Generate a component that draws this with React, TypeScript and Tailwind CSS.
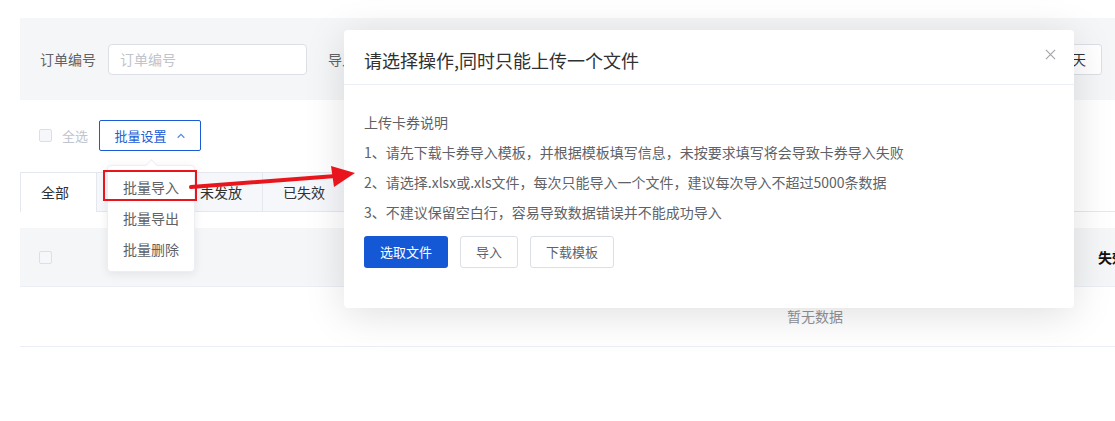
import React from "react";

const TABS = ["全部", "已发放", "未发放", "已失效", "已使用"];
const MENU = ["批量导入", "批量导出", "批量删除"];
const RULES = [
  "1、请先下载卡券导入模板，并根据模板填写信息，未按要求填写将会导致卡券导入失败",
  "2、请选择.xlsx或.xls文件，每次只能导入一个文件，建议每次导入不超过5000条数据",
  "3、不建议保留空白行，容易导致数据错误并不能成功导入",
];

function Box() {
  return <span className="block h-[13px] w-[13px] flex-none rounded-[2px] border border-[#dcdfe6] bg-[#f5f7fa]" />;
}

export default function App() {
  return (
    <div className="relative h-[421px] w-[1115px] overflow-hidden bg-white font-['Noto_Sans_CJK_SC',sans-serif] text-[14px] text-[#606266]">
      <div className="pl-5 pt-[18px]">
        {/* 筛选 */}
        <div className="flex h-[82px] items-center bg-[#f5f6f7] pl-5 pr-[13px]">
          <span className="mr-3 whitespace-nowrap">订单编号</span>
          <div className="flex h-[31px] w-[199px] items-center rounded-[4px] border border-[#dcdfe6] bg-white px-[11px] text-[#c0c4cc]">
            订单编号
          </div>
          <span className="ml-[21px] whitespace-nowrap">导入时间</span>
          <div className="flex-1" />
          <div className="flex h-[31px] items-center rounded-[3px] border border-[#dcdfe6] bg-white px-[15px] text-[#303133]">
            近7天
          </div>
        </div>

        {/* 操作栏 */}
        <div className="mt-5 flex h-[31px] items-center pl-[19px]">
          <Box />
          <span className="ml-[10px] text-[13px] text-[#c0c4cc]">全选</span>
          <button className="ml-[11px] flex h-[31px] w-[102px] items-center justify-center gap-[9px] rounded-[2px] border border-[#1a5bd6] text-[13px] text-[#1a5bd6]">
            批量设置
            <svg viewBox="0 0 12 12" className="h-[10px] w-[10px]" fill="none" stroke="#5b8ae0" strokeWidth={1.6}>
              <path d="M2 8l4-4 4 4" />
            </svg>
          </button>
        </div>

        {/* 标签 */}
        <div className="mt-[21px] flex h-10 w-[1200px]">
          {TABS.map((t, i) => (
            <div
              key={t}
              className={
                i === 0
                  ? "flex w-[77px] items-center border border-b-0 border-[#e4e7ed] bg-white pl-5 text-[#303133]"
                  : "flex w-[83px] items-center justify-center border-b border-r border-t border-[#e4e7ed] bg-[#f5f7fa] text-[#303133]"
              }
            >
              {t}
            </div>
          ))}
          <div className="flex-1 border-b border-[#e4e7ed]" />
        </div>

        {/* 表格 */}
        <div className="mt-4 w-[1590px]">
          <div className="grid h-[59px] grid-cols-[58px_1020px_1fr] items-center border-b border-[#ebeef5] bg-[#f5f6f8]">
            <div className="pl-[19px]">
              <Box />
            </div>
            <div />
            <div className="whitespace-nowrap font-bold text-[#111]">失效时间</div>
          </div>
          <div className="flex h-[60px] items-center justify-center border-b border-[#ebeef5] text-[#909399]">暂无数据</div>
        </div>
      </div>

      {/* 下拉菜单 */}
      <div className="absolute left-[107px] top-[165px] w-[88px] rounded-[4px] border border-[#ebeef5] bg-white py-[6px] shadow-[0_2px_10px_rgba(0,0,0,0.08)]">
        <span className="absolute -top-[5px] left-[39px] h-[9px] w-[9px] rotate-45 border-l border-t border-[#ebeef5] bg-white" />
        {MENU.map((m) => (
          <div key={m} className="flex h-[31px] items-center justify-center text-[#606266]">
            {m}
          </div>
        ))}
      </div>
      <div className="absolute left-[103px] top-[170px] h-[31px] w-[94px] border-2 border-[#e8161c]" />

      {/* 弹窗 */}
      <div className="absolute left-[344px] top-[30px] w-[730px] rounded-[4px] bg-white shadow-[0_6px_40px_rgba(0,0,0,0.13)]">
        <div className="flex items-center justify-between border-b border-[#ebeef5] px-5 pb-3 pt-[18px]">
          <span className="text-[18px] leading-6 text-[#303133]">请选择操作,同时只能上传一个文件</span>
          <svg viewBox="0 0 12 12" className="-mt-3 mr-[-2px] h-[11px] w-[11px]" fill="none" stroke="#a0a3a8" strokeWidth={1.2}>
            <path d="M1 1l10 10M11 1L1 11" />
          </svg>
        </div>
        <div className="px-5 pb-[40px] pt-[22px]">
          <div className="leading-[30px]">上传卡券说明</div>
          {RULES.map((r) => (
            <div key={r} className="leading-[30px]">
              {r}
            </div>
          ))}
          <div className="mt-[9px] flex gap-3 text-[13px]">
            <button className="h-8 rounded-[3px] bg-[#1558d6] px-4 text-white">选取文件</button>
            <button className="h-8 rounded-[3px] border border-[#dcdfe6] bg-white px-[15px] text-[#606266]">导入</button>
            <button className="h-8 rounded-[3px] border border-[#dcdfe6] bg-white px-[15px] text-[#606266]">下载模板</button>
          </div>
        </div>
      </div>

      {/* 红色箭头 */}
      <svg className="pointer-events-none absolute inset-0 h-[421px] w-[1115px]" viewBox="0 0 1115 421">
        <line x1="191" y1="187" x2="336" y2="176" stroke="#e8161c" strokeWidth="4" strokeLinecap="round" />
        <polygon points="331,166 355,173 334,187" fill="#e8161c" />
      </svg>
    </div>
  );
}
